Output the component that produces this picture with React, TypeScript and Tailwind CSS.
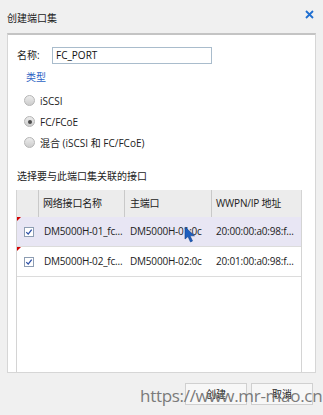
import React from 'react';

const font = { fontFamily: '"Open Sans", "Noto Sans CJK SC", sans-serif' };

function Radio({ checked, label }: { checked?: boolean; label: string }) {
  return (
    <div className="flex items-center gap-[5px] h-[21px]">
      <span className="w-[11px] h-[11px] rounded-full border border-[#b5b5b5] bg-gradient-to-b from-[#ececec] to-[#cdcdcd] flex items-center justify-center">
        {checked && <span className="w-[4px] h-[4px] rounded-full bg-[#4a4a4a]" />}
      </span>
      <span className="text-[10px] leading-[14px] text-[#222]">{label}</span>
    </div>
  );
}

function Check() {
  return (
    <span className="w-[10px] h-[10px] border border-[#8d9db2] bg-white flex items-center justify-center">
      <svg width="8" height="8" viewBox="0 0 8 8">
        <path d="M1.3 4.1 L3.2 6.1 L6.7 1.6" fill="none" stroke="#2c4fa6" strokeWidth="1.3" />
      </svg>
    </span>
  );
}

const rows = [
  { name: 'DM5000H-01_fc...', port: 'DM5000H-01:0c', wwpn: '20:00:00:a0:98:f...', hl: true },
  { name: 'DM5000H-02_fc...', port: 'DM5000H-02:0c', wwpn: '20:01:00:a0:98:f...', hl: false },
];

export default function App() {
  return (
    <div className="w-[323px] h-[415px] bg-[#f0f0f0] relative overflow-hidden flex flex-col" style={font}>
      <div className="h-[33px] flex items-center justify-between pl-[7px] pr-[9px]">
        <span className="text-[10px] leading-[14px] text-[#222] mt-[3px]">创建端口集</span>
        <svg width="9" height="9" viewBox="0 0 9 9" className="-mt-[5px]">
          <path d="M1 1 L8 8 M8 1 L1 8" stroke="#1f6fd1" strokeWidth="1.8" />
        </svg>
      </div>

      <div className="mx-[7px] h-[340px] bg-white border border-[#d6d6d6] border-t-[2px] border-t-[#c4c4c4] flex flex-col pl-[8px] pr-[13px]">
        <div className="flex items-center mt-[12px] h-[17px]">
          <span className="text-[10px] text-[#222] w-[36px] pl-[1px]">名称:</span>
          <div className="w-[160px] h-[17px] border border-[#a9bccc] flex items-center px-[3px] text-[10px] text-[#111]">
            FC_PORT
          </div>
        </div>
        <div className="mt-[6px] pl-[10px] text-[10px] leading-[14px] text-[#2d62c4]">类型</div>
        <div className="mt-[6px] pl-[8px] flex flex-col">
          <Radio label="iSCSI" />
          <Radio checked label="FC/FCoE" />
          <Radio label="混合 (iSCSI 和 FC/FCoE)" />
        </div>
        <div className="mt-[16px] text-[10px] leading-[14px] text-[#222] pl-[1px]">选择要与此端口集关联的接口</div>

        <div className="mt-[7px] flex-1 border-x border-[#d4d4d4] flex flex-col text-[10px] text-[#222] tracking-[-0.2px]">
          <div className="h-[27px] bg-[#ececec] flex items-center">
            <div className="w-[22px] h-full border-r border-[#c9c9c9]" />
            <div className="w-[86px] h-full border-r border-[#c9c9c9] flex items-center pl-[4px]">网络接口名称</div>
            <div className="w-[87px] h-full border-r border-[#c9c9c9] flex items-center pl-[5px]">主端口</div>
            <div className="flex-1 flex items-center pl-[4px]">WWPN/IP 地址</div>
          </div>
          {rows.map((r) => (
            <div
              key={r.name}
              className={`relative h-[30px] flex items-center border-b border-[#dcdcdc] ${r.hl ? 'bg-[#e8e6f4]' : 'bg-white'}`}
            >
              <span className="absolute left-0 top-0 w-0 h-0 border-t-[4px] border-t-[#d40000] border-r-[4px] border-r-transparent" />
              <div className="w-[22px] flex justify-center pl-[1px]">
                <Check />
              </div>
              <div className="w-[86px] pl-[5px] whitespace-nowrap overflow-hidden">{r.name}</div>
              <div className="w-[87px] pl-[5px] whitespace-nowrap overflow-hidden">{r.port}</div>
              <div className="flex-1 pl-[4px] whitespace-nowrap overflow-hidden">{r.wwpn}</div>
            </div>
          ))}
        </div>
      </div>

      <div className="flex justify-end gap-[4px] pr-[10px] mt-[10px]">
        <button className="w-[62px] h-[22px] border border-[#d0d0d0] bg-[#f7f7f7] text-[10px] text-[#222]">创建</button>
        <button className="w-[62px] h-[22px] border border-[#d0d0d0] bg-[#f7f7f7] text-[10px] text-[#222]">取消</button>
      </div>

      <div
        className="absolute left-[140px] top-[385px] text-[17px] leading-[22px] whitespace-nowrap text-[#6e6e6e] opacity-90 tracking-[-0.3px]"
        style={{ fontFamily: '"Open Sans", sans-serif' }}
      >
        https://www.mr-mao.cn
      </div>

      <svg className="absolute left-[184px] top-[226px]" width="12" height="17" viewBox="0 0 12 17">
        <path d="M1 1 L1 13 L4 10.5 L6.5 16 L8.5 15 L6 9.8 L10.5 9.8 Z" fill="#1d5fbf" stroke="#0f3f8a" strokeWidth="0.6" />
      </svg>
    </div>
  );
}
